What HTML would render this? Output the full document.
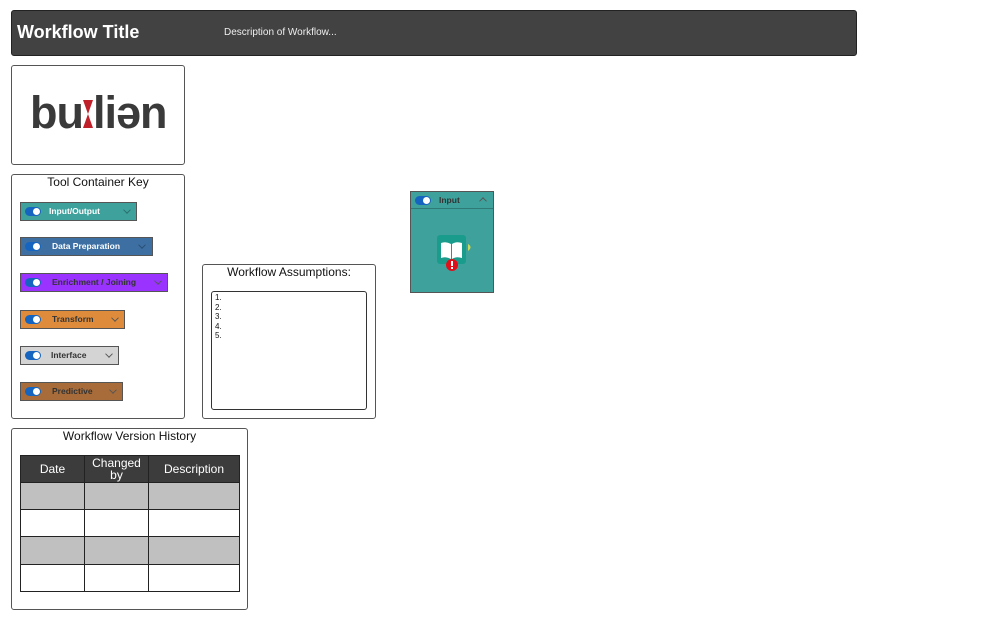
<!DOCTYPE html>
<html><head><meta charset="utf-8"><style>
*{box-sizing:border-box;margin:0;padding:0}
body{width:999px;height:620px;background:#fff;position:relative;overflow:hidden;font-family:"Liberation Sans",sans-serif}
.a{position:absolute}
.box{position:absolute;border:1px solid #555;border-radius:3px;background:#fff}
.pill{position:absolute;height:19px;border:1px solid #555;font-size:8.5px;font-weight:bold;line-height:17px}
.tg{position:absolute;left:4px;top:4px;width:16px;height:9px;border-radius:5px;background:#1565c0}
.tg:after{content:"";position:absolute;right:1px;top:1px;width:7px;height:7px;border-radius:50%;background:#fff}
.chev{position:absolute;top:4px;width:6px;height:6px;border-right:1px solid #555;border-bottom:1px solid #555;transform:rotate(45deg) scale(.9)}
table{border-collapse:collapse;position:absolute;left:20px;top:455px}
td{border:1px solid #222;font-size:12px;text-align:center}
</style></head><body>
<div class="a" style="left:11px;top:10px;width:846px;height:46px;background:#424242;border:1px solid #222;border-radius:3px"></div>
<div class="a" style="left:17px;top:22px;color:#fff;font-size:18px;font-weight:bold">Workflow Title</div>
<div class="a" style="left:224px;top:27px;color:#eee;font-size:10px">Description of Workflow...</div>

<div class="box" style="left:11px;top:65px;width:174px;height:100px"></div>
<div class="a" style="left:30px;top:87px;font-size:45px;font-weight:bold;color:#3a3a3a;letter-spacing:-1px">bu<span style="display:inline-block;width:10px;position:relative;height:30px"><svg width="10" height="32" style="position:absolute;left:0;top:0" viewBox="0 0 10 32"><path d="M0 2H10L5 16Z M0 30H10L5 16Z" fill="#c0202a"/></svg></span>liən</div>

<div class="box" style="left:11px;top:174px;width:174px;height:245px"></div>
<div class="a" style="left:11px;top:175px;width:174px;text-align:center;font-size:12px;color:#111">Tool Container Key</div>

<div class="pill" style="left:20px;top:202px;width:117px;background:#3fa19c;color:#fff"><div class="tg"></div><span style="position:absolute;left:28px">Input/Output</span><div class="chev" style="left:103px;border-color:#2a6e6a"></div></div>
<div class="pill" style="left:20px;top:237px;width:133px;background:#3d6fa3;color:#fff"><div class="tg"></div><span style="position:absolute;left:31px">Data Preparation</span><div class="chev" style="left:118px;border-color:#2a4d73"></div></div>
<div class="pill" style="left:20px;top:273px;width:148px;background:#9a33ff;color:#333"><div class="tg"></div><span style="position:absolute;left:31px">Enrichment / Joining</span><div class="chev" style="left:134px"></div></div>
<div class="pill" style="left:20px;top:310px;width:105px;background:#de8c3c;color:#333"><div class="tg"></div><span style="position:absolute;left:31px">Transform</span><div class="chev" style="left:91px"></div></div>
<div class="pill" style="left:20px;top:346px;width:99px;background:#d4d4d4;color:#333"><div class="tg"></div><span style="position:absolute;left:30px">Interface</span><div class="chev" style="left:85px"></div></div>
<div class="pill" style="left:20px;top:382px;width:103px;background:#a86c3a;color:#333"><div class="tg"></div><span style="position:absolute;left:31px">Predictive</span><div class="chev" style="left:89px"></div></div>

<div class="box" style="left:202px;top:264px;width:174px;height:155px"></div>
<div class="a" style="left:202px;top:265px;width:174px;text-align:center;font-size:12px;color:#111">Workflow Assumptions:</div>
<div class="box" style="left:211px;top:291px;width:156px;height:119px;border-color:#333"></div>
<div class="a" style="left:215px;top:293px;font-size:8px;line-height:9.5px;color:#111">1.<br>2.<br>3.<br>4.<br>5.</div>

<div class="box" style="left:11px;top:428px;width:237px;height:182px"></div>
<div class="a" style="left:11px;top:429px;width:237px;text-align:center;font-size:12px;color:#111">Workflow Version History</div>
<table>
<tr style="height:27px;background:#3c3c3c;color:#fff"><td style="width:64px">Date</td><td style="width:64px;line-height:12px">Changed<br>by</td><td style="width:91px">Description</td></tr>
<tr style="height:27px;background:#c0c0c0"><td></td><td></td><td></td></tr>
<tr style="height:27px"><td></td><td></td><td></td></tr>
<tr style="height:28px;background:#c0c0c0"><td></td><td></td><td></td></tr>
<tr style="height:27px"><td></td><td></td><td></td></tr>
</table>

<div class="a" style="left:410px;top:191px;width:84px;height:102px;background:#3fa19c;border:1px solid #555"></div>
<div class="a" style="left:411px;top:208px;width:82px;height:1px;background:#2f7a76"></div>
<div class="tg" style="left:415px;top:196px"></div>
<div class="a" style="left:439px;top:195px;font-size:8.5px;font-weight:bold;color:#333">Input</div>
<div class="chev" style="left:480px;top:198px;transform:rotate(225deg) scale(.9)"></div>
<svg class="a" style="left:437px;top:235px" width="40" height="38" viewBox="0 0 40 38">
<rect x="0" y="0" width="29" height="29" rx="3" fill="#1a9c8c"/>
<path d="M4 8 Q9 6 14 9 V24 Q9 21 4 23Z M25 8 Q19 6 15 9 V24 Q19 21 25 23Z" fill="#fff"/>
<path d="M31 9 Q36 12 31 16Z" fill="#c8dc5a"/>
<circle cx="15" cy="30" r="6" fill="#e0101a"/>
<rect x="14" y="26" width="2" height="5" fill="#fff"/><rect x="14" y="32" width="2" height="2" fill="#fff"/>
</svg>
</body></html>
